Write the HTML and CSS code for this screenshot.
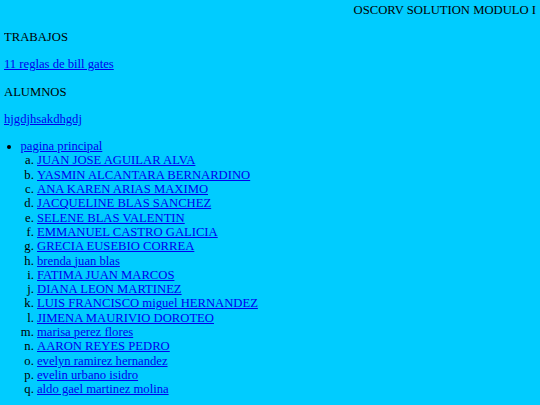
FILE: index.html
```html
<!DOCTYPE html>
<html lang="es">
<head>
<meta charset="utf-8">
<title>OSCORV SOLUTION MODULO I</title>
<link rel="stylesheet" href="styles.css">
</head>
<body class="page">
<div class="header">OSCORV SOLUTION MODULO I</div>
<p class="block">TRABAJOS</p>
<p class="block"><a href="#">11 reglas de bill gates</a></p>
<p class="block">ALUMNOS</p>
<p class="block"><a href="#">hjgdjhsakdhgdj</a></p>
<ul class="menu">
  <li><a href="#">pagina principal</a>
    <ol class="alumnos">
      <li><a href="#">JUAN JOSE AGUILAR ALVA</a></li>
      <li><a href="#">YASMIN ALCANTARA BERNARDINO</a></li>
      <li><a href="#">ANA KAREN ARIAS MAXIMO</a></li>
      <li><a href="#">JACQUELINE BLAS SANCHEZ</a></li>
      <li><a href="#">SELENE BLAS VALENTIN</a></li>
      <li><a href="#">EMMANUEL CASTRO GALICIA</a></li>
      <li><a href="#">GRECIA EUSEBIO CORREA</a></li>
      <li><a href="#">brenda juan blas</a></li>
      <li><a href="#">FATIMA JUAN MARCOS</a></li>
      <li><a href="#">DIANA LEON MARTINEZ</a></li>
      <li><a href="#">LUIS FRANCISCO miguel HERNANDEZ</a></li>
      <li><a href="#">JIMENA MAURIVIO DOROTEO</a></li>
      <li><a href="#">marisa perez flores</a></li>
      <li><a href="#">AARON REYES PEDRO</a></li>
      <li><a href="#">evelyn ramirez hernandez</a></li>
      <li><a href="#">evelin urbano isidro</a></li>
      <li><a href="#">aldo gael martinez molina</a></li>
    </ol>
  </li>
</ul>
</body>
</html>
```
FILE: styles.css
```css
html {
  background: #00ccff;
}
.page {
  margin: 3px 4px 4px;
  font-family: "Liberation Serif", "Times New Roman", serif;
  font-size: 12.65px;
  line-height: 14.31px;
  color: #000;
}
.header {
  text-align: right;
}
.block {
  margin: 12.9px 0;
}
.page a {
  color: #0000ee;
}
.menu {
  margin: 12.9px 0;
  padding-left: 16.5px;
  list-style: disc;
}
.alumnos {
  margin: 0;
  padding-left: 16.5px;
  list-style: lower-alpha;
}
```
